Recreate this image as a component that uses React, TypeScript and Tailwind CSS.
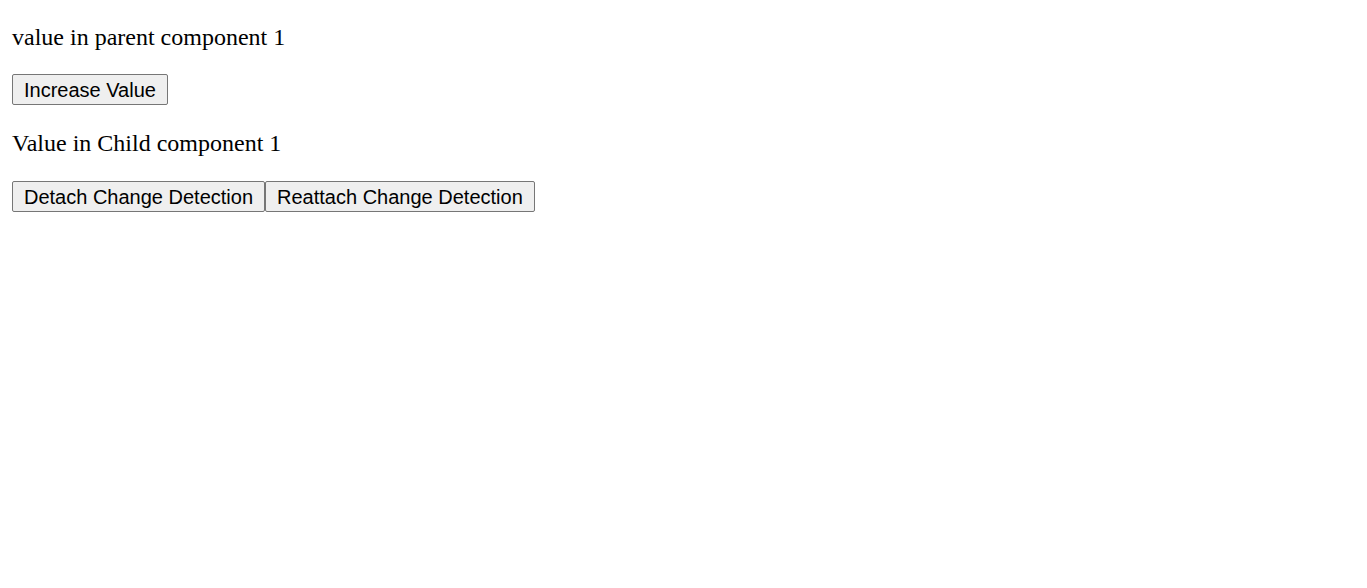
export default function App() {
  const btn =
    "h-[31px] px-[11px] pt-[1px] border border-[#767676] bg-[#efefef] rounded-[2px] text-[20px] leading-[23px] text-black font-['Liberation_Sans',Arial,sans-serif]";

  return (
    <div className="min-h-screen bg-white px-[12px] pt-[23px] font-['Liberation_Serif','Times_New_Roman',serif] text-black">
      {/* Parent */}
      <p className="text-[24px] leading-[28px] mb-[23px]">value in parent component 1</p>
      <div className="flex">
        <button className={btn}>Increase Value</button>
      </div>

      {/* Child */}
      <p className="text-[24px] leading-[28px] mt-[24px] mb-[24px]">Value in Child component 1</p>
      <div className="flex">
        <button className={btn}>Detach Change Detection</button>
        <button className={btn}>Reattach Change Detection</button>
      </div>
    </div>
  );
}
